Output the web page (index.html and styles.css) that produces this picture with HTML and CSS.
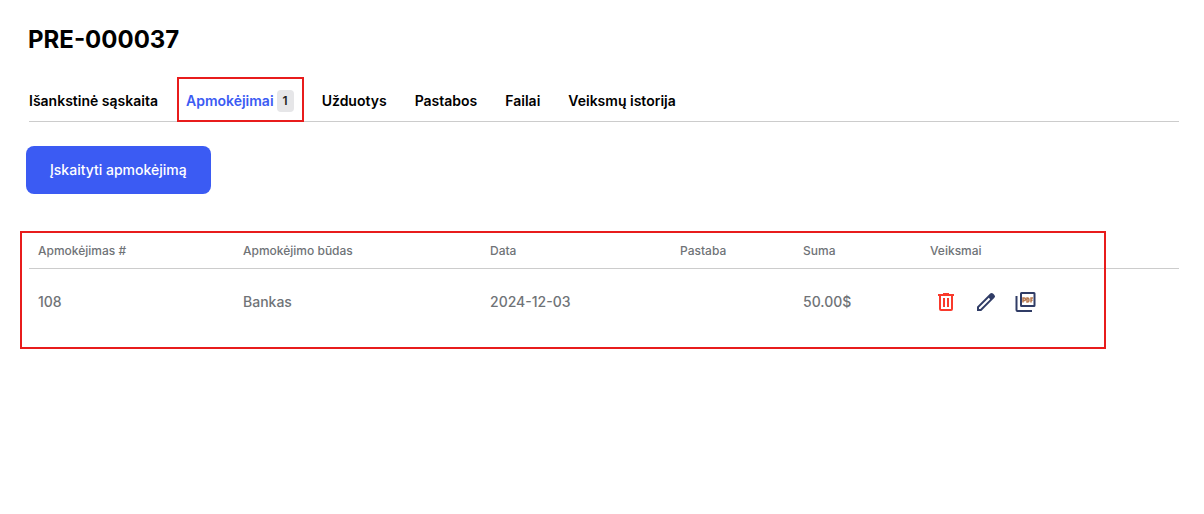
FILE: index.html
```html
<!DOCTYPE html>
<html lang="lt">
<head>
<meta charset="utf-8">
<meta name="viewport" content="width=device-width, initial-scale=1">
<title>PRE-000037</title>
<link rel="stylesheet" href="styles.css">
</head>
<body>
<main class="page">
  <h1 class="title">PRE-000037</h1>
  <nav class="tabs">
    <a class="tab" href="#">Išankstinė sąskaita</a>
    <a class="tab tab-active" href="#" aria-current="page">Apmokėjimai<span class="badge">1</span></a>
    <a class="tab" href="#">Užduotys</a>
    <a class="tab" href="#">Pastabos</a>
    <a class="tab" href="#">Failai</a>
    <a class="tab" href="#">Veiksmų istorija</a>
  </nav>
  <button class="primary" type="button">Įskaityti apmokėjimą</button>
  <section class="payments">
    <table class="table">
      <colgroup>
        <col class="col-number"><col class="col-method"><col class="col-date"><col class="col-note"><col class="col-sum"><col>
      </colgroup>
      <thead>
        <tr><th>Apmokėjimas #</th><th>Apmokėjimo būdas</th><th>Data</th><th>Pastaba</th><th>Suma</th><th>Veiksmai</th></tr>
      </thead>
      <tbody>
        <tr>
          <td>108</td><td>Bankas</td><td>2024-12-03</td><td></td><td>50.00$</td>
          <td>
            <div class="actions">
              <button class="action action-delete" type="button" aria-label="Ištrinti">
                <svg class="icon" viewBox="0 0 24 24"><path fill="currentColor" d="M9 3v1H4v2h1v13a2 2 0 0 0 2 2h10a2 2 0 0 0 2-2V6h1V4h-5V3H9zM7 6h10v13H7V6zm2 2v9h2V8H9zm4 0v9h2V8h-2z"/></svg>
              </button>
              <button class="action" type="button" aria-label="Redaguoti">
                <svg class="icon" viewBox="0 0 24 24"><path fill="currentColor" fill-rule="evenodd" d="M3 21v-4.250L16.200 3.600a2 2 0 0 1 2.800 0L20.400 5a2 2 0 0 1 0 2.800L7.250 21H3zM5 19h1.400l9.800-9.800-1.400-1.400L5 17.600V19z"/></svg>
              </button>
              <button class="action" type="button" aria-label="PDF">
                <svg class="icon" viewBox="0 0 24 24"><path fill="currentColor" fill-rule="evenodd" d="M7.500 2h12.500a1.500 1.500 0 0 1 1.500 1.500v12a1.500 1.500 0 0 1-1.500 1.500H7.500a1.500 1.500 0 0 1-1.500-1.500v-12A1.500 1.500 0 0 1 7.500 2zM8 4v11h11.500V4H8zM1.500 6h2v14H18v2H3.500a2 2 0 0 1-2-2V6z"/><path class="icon-mark" d="M9 12.500V8h1.300a1.200 1.200 0 0 1 0 2.500H9M13 8v4h.6a1.300 1.300 0 0 0 1.300-1.300V9.300A1.300 1.300 0 0 0 13.600 8zM17 12.500V8h2M17 10.300h1.600"/></svg>
              </button>
            </div>
          </td>
        </tr>
      </tbody>
    </table>
  </section>
</main>
</body>
</html>
```
FILE: styles.css
```css
* {
  box-sizing: border-box;
}

body {
  margin: 0;
  background: #fff;
  color: #000;
  font-family: Inter, "Liberation Sans", sans-serif;
  font-size: 14px;
  line-height: 20px;
}

.page {
  padding: 24px 25px 24px 29px;
}

.title {
  margin: 0 0 28px -1px;
  font-size: 24px;
  font-weight: 700;
  line-height: 32px;
}

.tabs {
  display: flex;
  gap: 28px;
  border-bottom: 1px solid #ccc;
}

.tab {
  position: relative;
  display: flex;
  align-items: center;
  gap: 3px;
  height: 37px;
  padding-bottom: 3px;
  color: #000;
  font-weight: 600;
  white-space: nowrap;
  text-decoration: none;
}

.tab-active {
  color: #3b5bf3;
}

/* Highlight frames drawn over the content */
.tab-active::after,
.payments::after {
  content: "";
  position: absolute;
  border: 2px solid #e81c1c;
  pointer-events: none;
}

.tab-active::after {
  inset: -7px -10px -1px -9px;
}

.badge {
  padding: 0 6px;
  border-radius: 4px;
  background: #e6e6e8;
  color: #222;
  font-size: 12px;
  line-height: 22px;
}

.primary {
  display: block;
  height: 48px;
  margin: 24px 0 0 -3px;
  padding: 0 24px;
  border: 0;
  border-radius: 8px;
  background: #3b5bf3;
  color: #fff;
  font: inherit;
  font-weight: 500;
}

.payments {
  position: relative;
  margin-top: 40px;
}

.payments::after {
  inset: -3px 73px 0 -9px;
}

.table {
  width: 100%;
  table-layout: fixed;
  border-collapse: collapse;
  color: #6f7377;
  text-align: left;
}

.col-number { width: 205px; }
.col-method { width: 247px; }
.col-date { width: 190px; }
.col-note { width: 123px; }
.col-sum { width: 127px; }

.table th {
  height: 34px;
  padding: 0 9px;
  border-bottom: 1px solid #ccc;
  font-size: 12px;
  font-weight: 500;
}

.table td {
  height: 81px;
  padding: 21px 9px;
  font-weight: 500;
  line-height: 24px;
  vertical-align: top;
}

.actions {
  display: flex;
  gap: 16px;
  padding-left: 4px;
}

.action {
  display: flex;
  padding: 0;
  border: 0;
  background: none;
  color: #303c66;
}

.action-delete {
  color: #f93a2c;
}

.icon {
  width: 24px;
  height: 24px;
}

.icon-mark {
  fill: none;
  stroke: #b8784e;
  stroke-width: 1.5;
}
```
